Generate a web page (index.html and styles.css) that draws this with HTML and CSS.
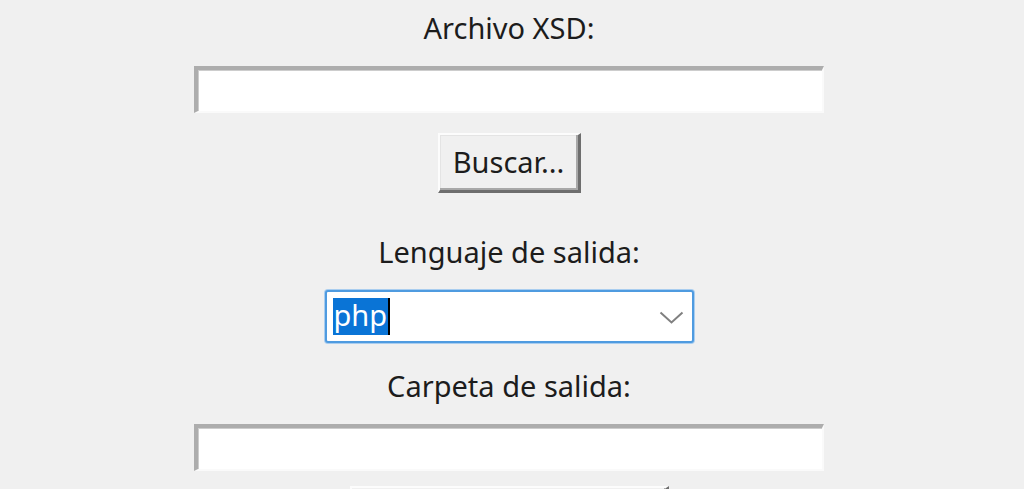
FILE: index.html
```html
<!DOCTYPE html>
<html lang="es">
<head>
<meta charset="utf-8">
<title>XSD</title>
<link rel="stylesheet" href="styles.css">
</head>
<body>
<div class="form">
  <div class="label label-first">Archivo XSD:</div>
  <div class="entry"></div>
  <div class="button button-search">Buscar...</div>
  <div class="label label-lang">Lenguaje de salida:</div>
  <div class="combo">
    <span class="combo-value"><span class="selected">php</span><span class="caret"></span></span>
    <svg class="chevron" width="25" height="13" viewBox="0 0 25 13"><path d="M1.5 1.5 L12.5 11.5 L23.5 1.5" fill="none" stroke="#808080" stroke-width="2"/></svg>
  </div>
  <div class="label label-folder">Carpeta de salida:</div>
  <div class="entry entry-folder"></div>
  <div class="button button-bottom"></div>
</div>
</body>
</html>
```
FILE: styles.css
```css
html, body {
  margin: 0;
  padding: 0;
  background: #f0f0f0;
  overflow: hidden;
  height: 489px;
}

body {
  font-family: "Noto Sans", "Open Sans", sans-serif;
  color: #1c1c1c;
}

.form {
  width: 630px;
  height: 489px;
  overflow: hidden;
  margin-left: 194px;
  display: flex;
  flex-direction: column;
  align-items: center;
}

.label {
  font-size: 29px;
  line-height: 36px;
  height: 36px;
  white-space: nowrap;
}

.label-first { margin-top: 10px; margin-bottom: 20px; }
.label-lang { margin-top: 41px; }
.label-folder { margin-top: 25px; }

.entry {
  box-sizing: border-box;
  align-self: stretch;
  flex: none;
  height: 47px;
  background: #ffffff;
  border-top: 4px solid #adadad;
  border-left: 4px solid #adadad;
  border-right: 2px solid #fafafa;
  border-bottom: 2px solid #fafafa;
  box-shadow: inset 1px 1px 0 #cdcdcd;
}

.entry-folder { margin-top: 20px; }

.button {
  box-sizing: border-box;
  flex: none;
  background: #f0f0f0;
  border-top: 2px solid #fcfcfc;
  border-left: 2px solid #fcfcfc;
  border-right: 3px solid #6e6e6e;
  border-bottom: 3px solid #6e6e6e;
  box-shadow: inset -2px -2px 0 #a8a8a8, inset 1px 1px 0 #e4e4e4;
  font-size: 29px;
  display: flex;
  align-items: center;
  justify-content: center;
}

.button-search {
  margin-top: 20px;
  width: 143px;
  height: 60px;
  padding-bottom: 3px;
}

.button-bottom {
  margin-top: 15px;
  width: 319px;
  height: 3px;
  border-bottom: 0;
  box-shadow: inset -2px 0 0 #a8a8a8;
}

.combo {
  box-sizing: border-box;
  flex: none;
  margin-top: 20px;
  width: 369px;
  height: 53px;
  background: #ffffff;
  border: 2px solid #4f9be0;
  border-radius: 3px;
  box-shadow: 0 0 0 1px #a9cdef;
  display: flex;
  align-items: center;
  justify-content: space-between;
  padding: 0 8px 0 6px;
}

.combo-value {
  display: flex;
  align-items: stretch;
  height: 37px;
}

.selected {
  background: #0a74d6;
  color: #ffffff;
  font-size: 29px;
  line-height: 34px;
  padding: 0 1px;
  width: 53px;
  white-space: nowrap;
}

.caret {
  width: 2px;
  background: #000000;
}

.chevron {
  display: block;
  margin-top: 2px;
}
```
